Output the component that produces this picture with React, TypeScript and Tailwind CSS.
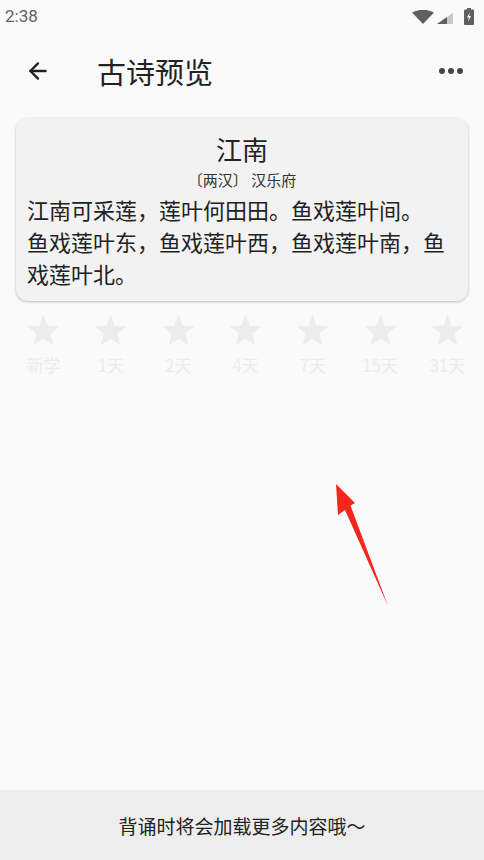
import { ArrowLeft } from 'lucide-react';

const font = { fontFamily: '"Noto Sans CJK SC", Roboto, "Noto Sans", sans-serif' };

const stages = ['新学', '1天', '2天', '4天', '7天', '15天', '31天'];

const lines = ['江南可采莲，莲叶何田田。鱼戏莲叶间。', '鱼戏莲叶东，鱼戏莲叶西，鱼戏莲叶南，鱼戏莲叶北。'];

const StatusBar = () => (
  <div className="flex h-[33px] items-center justify-between px-[5px]">
    <span className="text-[17px] leading-none text-[#5f5f5f]" style={{ fontFamily: 'Roboto, sans-serif' }}>
      2:38
    </span>
    <div className="flex items-center gap-[3px] pr-[5px]">
      <svg width="22" height="14" viewBox="0 0 22 14">
        <path d="M0 2.5 Q11 -3 22 2.5 L11 14 Z" fill="#5f5f5f" />
      </svg>
      <svg width="16" height="11" viewBox="0 0 16 11" className="mt-[3px]">
        <path d="M0 11 L16 0 L16 11 Z" fill="#c8c8c8" />
        <path d="M0 11 L10 4.1 L10 11 Z" fill="#5f5f5f" />
      </svg>
      <svg width="10" height="17" viewBox="0 0 10 17" className="ml-[8px]">
        <rect x="3" y="0" width="4" height="2" fill="#5f5f5f" />
        <rect x="0" y="1.5" width="10" height="15.5" rx="1" fill="#5f5f5f" />
        <path d="M6 4 L3 9.5 L5 9.5 L4 14 L7 8 L5 8 Z" fill="#fafafa" />
      </svg>
    </div>
  </div>
);

const Star = () => (
  <svg width="35" height="33" viewBox="0 0 24 23">
    <path d="M12 0.5 L14.9 8.2 L23.2 8.6 L16.7 13.8 L18.9 21.8 L12 17.3 L5.1 21.8 L7.3 13.8 L0.8 8.6 L9.1 8.2 Z" fill="#ececec" />
  </svg>
);

export default function App() {
  return (
    <div className="relative flex h-[860px] w-[484px] flex-col overflow-hidden bg-[#fafafa]" style={font}>
      <StatusBar />

      <div className="flex h-[76px] items-center pl-[25px] pr-[21px]">
        <ArrowLeft size={26} strokeWidth={2.2} color="#222" />
        <h1 className="ml-[46px] text-[29px] leading-none text-[#222]">古诗预览</h1>
        <div className="ml-auto flex gap-[3px]">
          <span className="h-[6px] w-[6px] rounded-full bg-[#444]" />
          <span className="h-[6px] w-[6px] rounded-full bg-[#444]" />
          <span className="h-[6px] w-[6px] rounded-full bg-[#444]" />
        </div>
      </div>

      <div className="mx-4 mt-[9px] rounded-[12px] bg-[#f2f2f2] px-[11px] pb-[12px] pt-[15px] shadow-[0_1px_3px_rgba(0,0,0,0.25)]">
        <div className="text-center text-[26px] leading-[32px] text-[#222]">江南</div>
        <div className="mt-[6px] text-center text-[15px] leading-[18px] text-[#333]">〔两汉〕 汉乐府</div>
        <div className="mt-[4px] text-[22px] leading-[32px] text-[#222]">
          {lines.map((l) => (
            <div key={l}>{l}</div>
          ))}
        </div>
      </div>

      <div className="mt-[13px] grid grid-cols-7 pl-[10px] pr-[3px]">
        {stages.map((s) => (
          <div key={s} className="flex flex-col items-center">
            <Star />
            <span className="mt-[7px] text-[17px] leading-[22px] text-[#ececec]">{s}</span>
          </div>
        ))}
      </div>

      {/* red pointer */}
      <svg className="absolute left-[334px] top-[482px]" width="58" height="128" viewBox="0 0 58 128">
        <path d="M2 2 L21 21 L16.5 23.5 L54 124 L11 28 L4 33 Z" fill="#f5261c" />
      </svg>

      <div className="mt-auto flex h-[70px] items-center justify-center bg-[#ededed]">
        <span className="text-[19px] leading-none text-[#222]">背诵时将会加载更多内容哦～</span>
      </div>
    </div>
  );
}
